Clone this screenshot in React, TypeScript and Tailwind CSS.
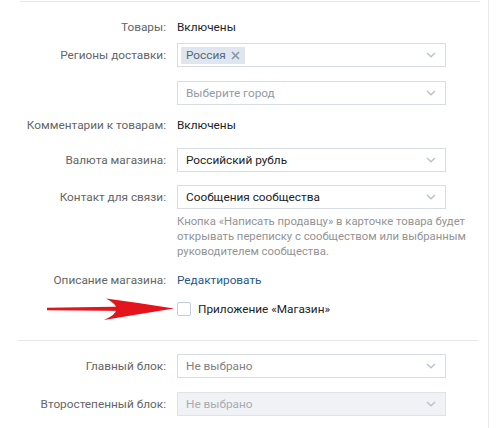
import React from "react";

const Chevron = () => (
  <svg width="10" height="6" viewBox="0 0 10 6" className="shrink-0">
    <path d="M1 1 L5 4.8 L9 1" fill="none" stroke="#b8c1cc" strokeWidth="1.3" />
  </svg>
);

function Select({
  children,
  disabled,
  textClass = "text-[#222]",
}: {
  children: React.ReactNode;
  disabled?: boolean;
  textClass?: string;
}) {
  return (
    <div
      className={`w-[269px] h-[24px] flex items-center justify-between pl-[8px] pr-[9px] border ${
        disabled ? "border-[#dfe3e8] bg-[#f0f2f5]" : "border-[#d8dde3] bg-white"
      }`}
    >
      <span className={textClass}>{children}</span>
      <Chevron />
    </div>
  );
}

function Row({
  label,
  children,
  className = "",
}: {
  label?: string;
  children: React.ReactNode;
  className?: string;
}) {
  return (
    <div className={`flex items-center h-[24px] ${className}`}>
      <div className="w-[167px] text-right text-[#656565] pr-[1px] whitespace-nowrap">{label}</div>
      <div className="ml-[10px] flex items-center">{children}</div>
    </div>
  );
}

export default function App() {
  return (
    <div
      className="w-[496px] h-[428px] bg-white overflow-hidden text-[11.8px] leading-[16px]"
      style={{ fontFamily: 'Roboto, "Liberation Sans", sans-serif' }}
    >
      <div className="w-[489px] h-[428px] border-r border-[#e7e8ec] relative">
        <div className="ml-[20px] w-[460px] pt-[1px]">
          <div className="border-t border-[#e7e8ec]" />
        </div>

        <Row label="Товары:" className="mt-[13px]">
          <span className="text-[#222]">Включены</span>
        </Row>

        <Row label="Регионы доставки:" className="mt-[4px]">
          <div className="w-[269px] h-[24px] flex items-center justify-between pl-[3px] pr-[9px] border border-[#d8dde3]">
            <div className="h-[17px] flex items-center bg-[#dfe6ee] pl-[5px] pr-[5px] text-[#55677d]">
              Россия
              <svg width="9" height="9" viewBox="0 0 9 9" className="ml-[5px]">
                <path d="M1 1 L8 8 M8 1 L1 8" stroke="#8597ab" strokeWidth="1.6" />
              </svg>
            </div>
            <Chevron />
          </div>
        </Row>

        <Row className="mt-[14px]">
          <Select textClass="text-[#939aa3]">Выберите город</Select>
        </Row>

        <Row label="Комментарии к товарам:" className="mt-[8px]">
          <span className="text-[#222]">Включены</span>
        </Row>

        <Row label="Валюта магазина:" className="mt-[11px]">
          <Select>Российский рубль</Select>
        </Row>

        <Row label="Контакт для связи:" className="mt-[13px]">
          <Select>Сообщения сообщества</Select>
        </Row>

        <div className="ml-[177px] mt-[5px] w-[300px] text-[11.3px] leading-[15px] text-[#939393]">
          Кнопка «Написать продавцу» в карточке товара будет открывать переписку с сообществом или выбранным
          руководителем сообщества.
        </div>

        <Row label="Описание магазина:" className="mt-[9px]">
          <span className="text-[#2a5885]">Редактировать</span>
        </Row>

        <Row className="mt-[5px]">
          <div className="w-[14px] h-[14px] border border-[#c5ced8] rounded-[2px] bg-white" />
          <span className="ml-[7px] text-[#222]">Приложение «Магазин»</span>
        </Row>

        <svg
          className="absolute left-0 top-0 pointer-events-none"
          width="200"
          height="340"
          viewBox="0 0 200 340"
        >
          <path d="M47 307.8 L130 306.5 L130 311 L47 310.2 Z" fill="#e3141b" />
          <path d="M106 298.5 Q140 303 174 308.5 Q140 314 104 320 Q128 309.5 106 298.5 Z" fill="#e3141b" />
        </svg>

        <div className="ml-[18px] w-[460px] mt-[19px] border-t border-[#e7e8ec]" />

        <Row label="Главный блок:" className="mt-[13px]">
          <Select textClass="text-[#828282]">Не выбрано</Select>
        </Row>

        <Row label="Второстепенный блок:" className="mt-[14px]">
          <Select disabled textClass="text-[#a7acb2]">
            Не выбрано
          </Select>
        </Row>

        <div className="ml-[18px] w-[460px] mt-[12px] border-t border-[#e7e8ec]" />
      </div>
    </div>
  );
}
